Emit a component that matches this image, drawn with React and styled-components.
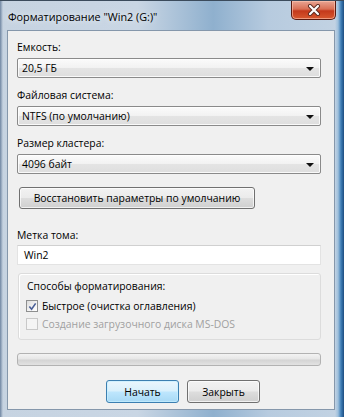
import React from 'react';
import styled, { createGlobalStyle } from 'styled-components';

const Global = createGlobalStyle`
  html, body {
    margin: 0;
    padding: 0;
    background: #ffffff;
  }
  body {
    font-family: "Open Sans", "Noto Sans", "Liberation Sans", sans-serif;
    font-size: 10.4px;
    color: #000;
  }
`;

const Window = styled.div`
  width: 344px;
  height: 417px;
  box-sizing: border-box;
  display: flex;
  flex-direction: column;
  padding: 0 9px 7px 7px;
  border-top: 1px solid #3b4b5c;
  background:
    linear-gradient(90deg, rgba(40, 70, 110, 0.55) 0, rgba(40, 70, 110, 0) 3px),
    linear-gradient(270deg, #1d4d80 0, #3f7fb8 3px, #9fc0dc 6px, rgba(180, 205, 225, 0) 9px),
    linear-gradient(90deg, #c6d3e1 0%, #c9d6e4 40%, #8fb0ce 62%, #b7cbdf 78%, #c3d3e3 100%);
`;

const TitleBar = styled.div`
  height: 29px;
  display: flex;
  align-items: flex-start;
  justify-content: space-between;
  flex-shrink: 0;
`;

const Title = styled.div`
  padding: 8px 0 0 1px;
  font-size: 10.8px;
  color: #000;
  text-shadow: 0 0 6px rgba(255, 255, 255, 0.9);
`;

const CloseButton = styled.div`
  width: 45px;
  height: 19px;
  margin-right: -1px;
  box-sizing: border-box;
  border: 1px solid #5a1a10;
  border-top: none;
  border-radius: 0 0 5px 5px;
  background: linear-gradient(180deg, #e8a593 0%, #d96f55 45%, #c4391b 55%, #d7582f 100%);
  box-shadow: inset 0 0 0 1px rgba(255, 200, 180, 0.6);
  display: flex;
  align-items: center;
  justify-content: center;
`;

const Client = styled.div`
  flex: 1;
  background: #f0f0f0;
  border: 1px solid #8597ab;
  display: flex;
  flex-direction: column;
  padding: 9px 13px 0 9px;
`;

const Label = styled.div`
  line-height: 15px;
  height: 15px;
  white-space: nowrap;
`;

const Combo = styled.div`
  margin: 3px 0 10px;
  height: 20px;
  box-sizing: border-box;
  border: 1px solid #8a8a8a;
  border-radius: 2px;
  background: linear-gradient(180deg, #fbfbfb 0%, #f2f2f2 48%, #e4e4e4 52%, #dedede 100%);
  box-shadow: inset 0 0 0 1px rgba(255, 255, 255, 0.8);
  display: flex;
  align-items: center;
  justify-content: space-between;
  padding: 0 6px 0 4px;
`;

const Arrow = styled.span`
  width: 0;
  height: 0;
  border-left: 4px solid transparent;
  border-right: 4px solid transparent;
  border-top: 4px solid #111;
  margin-top: 1px;
`;

const Button = styled.div`
  height: ${p => p.$h || 23}px;
  width: ${p => p.$w}px;
  box-sizing: border-box;
  border: 1px solid ${p => (p.$primary ? '#3c7fb1' : '#707070')};
  border-radius: 3px;
  background: ${p =>
    p.$primary
      ? 'linear-gradient(180deg, #eaf6fd 0%, #d9f0fc 48%, #bee6fd 52%, #a7d9f5 100%)'
      : 'linear-gradient(180deg, #f2f2f2 0%, #ebebeb 48%, #dddddd 52%, #cfcfcf 100%)'};
  box-shadow: inset 0 0 0 1px ${p => (p.$primary ? 'rgba(200, 240, 255, 0.7)' : 'rgba(255, 255, 255, 0.7)')};
  display: flex;
  align-items: center;
  justify-content: center;
  white-space: nowrap;
`;

const RestoreRow = styled.div`
  margin: 3px 0 0 2px;
`;

const VolumeLabel = styled(Label)`
  margin-top: 19px;
`;

const TextInput = styled.div`
  margin-top: 2px;
  height: 20px;
  box-sizing: border-box;
  background: #fff;
  border: 1px solid #e3e3e3;
  border-top-color: #d0d0d0;
  padding: 0 6px;
  display: flex;
  align-items: center;
`;

const Group = styled.div`
  margin: 8px 0 0 1px;
  height: 67px;
  box-sizing: border-box;
  border: 1px solid #dcdcdc;
  border-radius: 3px;
  box-shadow: inset 1px 1px 0 #ffffff;
  padding: 5px 0 0 7px;
  display: flex;
  flex-direction: column;
`;

const CheckRow = styled.div`
  display: flex;
  align-items: center;
  gap: 4px;
  height: 18px;
  color: ${p => (p.$disabled ? '#a0a0a0' : '#000')};
`;

const Box = styled.span`
  width: 12px;
  height: 12px;
  box-sizing: border-box;
  border: 1px solid ${p => (p.$disabled ? '#c8c8c8' : '#8e8f8f')};
  background: ${p =>
    p.$disabled ? '#f4f4f4' : 'linear-gradient(135deg, #dcdcdc 0%, #f4f4f4 60%, #ffffff 100%)'};
  display: flex;
  align-items: center;
  justify-content: center;
  flex-shrink: 0;
`;

const GroupTitle = styled.div`
  line-height: 15px;
  margin: 0 0 3px 1px;
`;

const Progress = styled.div`
  margin-top: 13px;
  height: 13px;
  box-sizing: border-box;
  border: 1px solid #b2b2b2;
  border-radius: 3px;
  background: linear-gradient(180deg, #f3f3f3 0%, #e6e6e6 45%, #d4d4d4 55%, #e2e2e2 100%);
`;

const Footer = styled.div`
  margin-top: 14px;
  display: flex;
  gap: 8px;
  padding-left: 89px;
`;

const Check = () => (
  <svg width="9" height="9" viewBox="0 0 10 10">
    <path d="M1.5 5 L4 8 L8.5 1.5" fill="none" stroke="#4a5f97" strokeWidth="1.8" />
  </svg>
);

const CloseX = () => (
  <svg width="14" height="12" viewBox="0 0 14 12">
    <path d="M3 2 L11 10 M11 2 L3 10" stroke="#5a2a20" strokeWidth="4" strokeLinecap="round" />
    <path d="M3 2 L11 10 M11 2 L3 10" stroke="#ffffff" strokeWidth="2.2" strokeLinecap="round" />
  </svg>
);

const fields = [
  { label: 'Емкость:', value: '20,5 ГБ' },
  { label: 'Файловая система:', value: 'NTFS (по умолчанию)' },
  { label: 'Размер кластера:', value: '4096 байт' },
];

export default function App() {
  return (
    <>
      <Global />
      <Window>
        <TitleBar>
          <Title>Форматирование "Win2 (G:)"</Title>
          <CloseButton>
            <CloseX />
          </CloseButton>
        </TitleBar>
        <Client>
          {fields.map(f => (
            <React.Fragment key={f.label}>
              <Label>{f.label}</Label>
              <Combo>
                <span>{f.value}</span>
                <Arrow />
              </Combo>
            </React.Fragment>
          ))}
          <RestoreRow>
            <Button $w={236} $h={22}>Восстановить параметры по умолчанию</Button>
          </RestoreRow>
          <VolumeLabel>Метка тома:</VolumeLabel>
          <TextInput>Win2</TextInput>
          <Group>
            <GroupTitle>Способы форматирования:</GroupTitle>
            <CheckRow>
              <Box>
                <Check />
              </Box>
              Быстрое (очистка оглавления)
            </CheckRow>
            <CheckRow $disabled>
              <Box $disabled />
              Создание загрузочного диска MS-DOS
            </CheckRow>
          </Group>
          <Progress />
          <Footer>
            <Button $primary $w={73}>Начать</Button>
            <Button $w={73}>Закрыть</Button>
          </Footer>
        </Client>
      </Window>
    </>
  );
}
